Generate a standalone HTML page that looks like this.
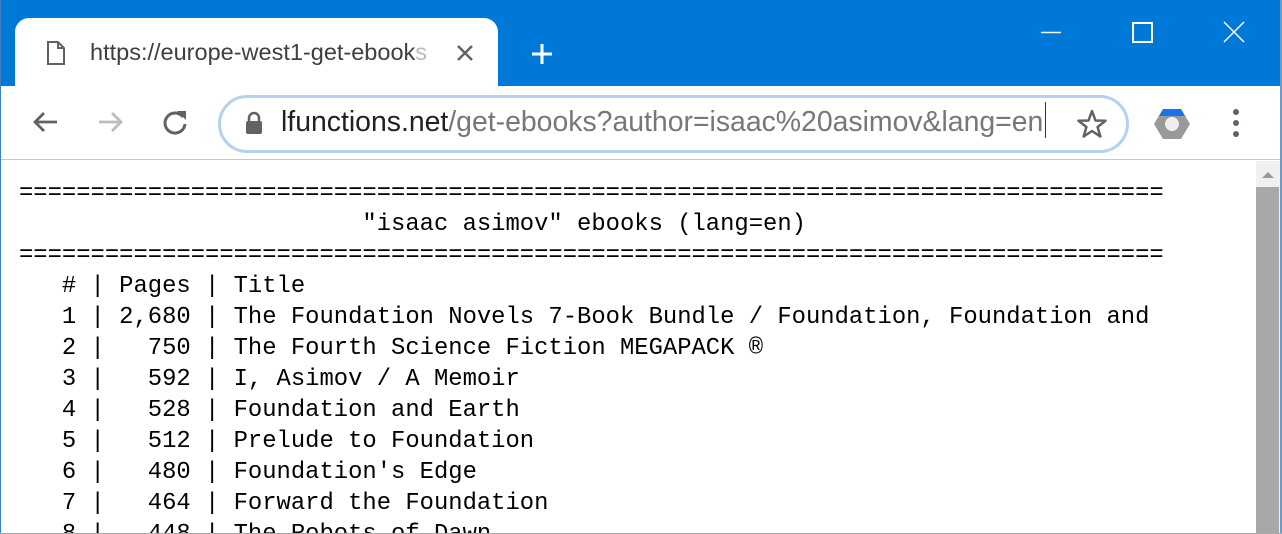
<!DOCTYPE html>
<html><head><style>
*{margin:0;padding:0;box-sizing:border-box}
html,body{width:1282px;height:534px;overflow:hidden}
body{background:#fff;position:relative;font-family:"Liberation Sans",sans-serif}
.top{position:absolute;left:0;top:0;width:1282px;height:87px;background:#0078d7}
.tab{position:absolute;left:15px;top:18px;width:483px;height:72px;background:#fff;border-radius:14px 14px 0 0}
.tabtxt{position:absolute;left:90px;top:39px;font-size:23.5px;color:#3c4043;white-space:nowrap;width:350px;overflow:hidden}
.toolbar{position:absolute;left:0;top:86px;width:1282px;height:74px;background:#fff;border-bottom:1px solid #c8c8c8}
.omni{position:absolute;left:218px;top:95px;width:911px;height:58px;border:3px solid #b5d1f2;border-radius:29px;background:#fff}
.url{position:absolute;left:281px;top:106px;font-size:28.4px;color:#777;white-space:nowrap;width:765px;overflow:hidden}
.url b{font-weight:normal;color:#202124}
pre{position:absolute;left:19px;top:178px;font-family:"Liberation Mono",monospace;font-size:23.85px;line-height:31px;color:#000}
.sb{position:absolute;left:1256px;top:161px;width:24px;height:373px;background:#f0f0f0}
.thumb{position:absolute;left:1256px;top:187px;width:23px;height:347px;background:#a8a8a8}
.lb{position:absolute;left:0;top:0;width:1px;height:534px;background:#3b82c4}
.rb{position:absolute;right:0;top:0;width:2px;height:534px;background:#6e9bc6}
.bb{position:absolute;left:0;top:533px;width:1282px;height:1px;background:#aaa}
</style></head><body>
<div class="top"></div>
<div class="tab"></div>
<svg style="position:absolute;left:46px;top:40px" width="20" height="26" viewBox="0 0 20 26"><path d="M2 2h10l6 6v16H2z M12 2v6h6" fill="none" stroke="#5f6368" stroke-width="2"/></svg>
<div class="tabtxt">https://europe-west1-get-ebook<span style="color:#bbb">s</span></div>
<svg style="position:absolute;left:456px;top:44px" width="18" height="18"><path d="M2 2L16 16M16 2L2 16" stroke="#5f6368" stroke-width="2.5"/></svg>
<svg style="position:absolute;left:530px;top:42px" width="24" height="24"><path d="M12 2V22M2 12H22" stroke="#fff" stroke-width="3"/></svg>
<svg style="position:absolute;left:1030px;top:10px" width="240" height="40"><path d="M11 22.5H31" stroke="#fff" stroke-width="1.5"/><rect x="103" y="13" width="19" height="19" fill="none" stroke="#fff" stroke-width="2"/><path d="M194 12L214 32M214 12L194 32" stroke="#fff" stroke-width="1.5"/></svg>
<div class="toolbar"></div>
<svg style="position:absolute;left:30px;top:108px" width="30" height="30"><path d="M27 14H5M14 5L5 14L14 23" fill="none" stroke="#5f6368" stroke-width="2.8"/></svg>
<svg style="position:absolute;left:96px;top:108px" width="30" height="30"><path d="M3 14H25M16 5L25 14L16 23" fill="none" stroke="#bdbdbd" stroke-width="2.8"/></svg>
<svg style="position:absolute;left:159px;top:107px" width="32" height="32"><path d="M24 10A10 10 0 1 0 26 17" fill="none" stroke="#5f6368" stroke-width="3"/><path d="M18 4H27V13z" fill="#5f6368"/></svg>
<div class="omni"></div>
<svg style="position:absolute;left:244px;top:111px" width="20" height="24"><path d="M5 10V7a5 5 0 0 1 10 0v3" fill="none" stroke="#5f6368" stroke-width="2.5"/><rect x="2" y="10" width="16" height="13" rx="2" fill="#5f6368"/></svg>
<div class="url"><b>lfunctions.net</b>/get-ebooks?author=isaac%20asimov&amp;lang=en</div>
<div style="position:absolute;left:1045px;top:102px;width:1px;height:36px;background:#333"></div>
<svg style="position:absolute;left:1076px;top:108px" width="32" height="32"><path d="M16 3L19.5 12.5L29.5 12.8L21.6 19L24.4 28.6L16 23L7.6 28.6L10.4 19L2.5 12.8L12.5 12.5Z" fill="none" stroke="#5f6368" stroke-width="2.5" stroke-linejoin="round"/></svg>
<svg style="position:absolute;left:1152px;top:106px" width="40" height="36"><path d="M11 3H29L38 18L29 33H11L2 18Z" fill="#999"/><path d="M11 3H29L33 10H7Z" fill="#1a73e8"/><circle cx="20" cy="18" r="7" fill="#eee"/></svg>
<svg style="position:absolute;left:1228px;top:108px" width="16" height="30"><circle cx="8" cy="4" r="3" fill="#5f6368"/><circle cx="8" cy="15" r="3" fill="#5f6368"/><circle cx="8" cy="26" r="3" fill="#5f6368"/></svg>
<pre>================================================================================
                        "isaac asimov" ebooks (lang=en)
================================================================================
   # | Pages | Title
   1 | 2,680 | The Foundation Novels 7-Book Bundle / Foundation, Foundation and
   2 |   750 | The Fourth Science Fiction MEGAPACK ®
   3 |   592 | I, Asimov / A Memoir
   4 |   528 | Foundation and Earth
   5 |   512 | Prelude to Foundation
   6 |   480 | Foundation's Edge
   7 |   464 | Forward the Foundation
   8 |   448 | The Robots of Dawn</pre>
<div class="sb"></div>
<svg style="position:absolute;left:1260px;top:170px" width="16" height="10"><path d="M2 8L8 2L14 8Z" fill="#999"/></svg>
<div class="thumb"></div>
<div class="lb"></div><div class="rb"></div><div class="bb"></div>
</body></html>
